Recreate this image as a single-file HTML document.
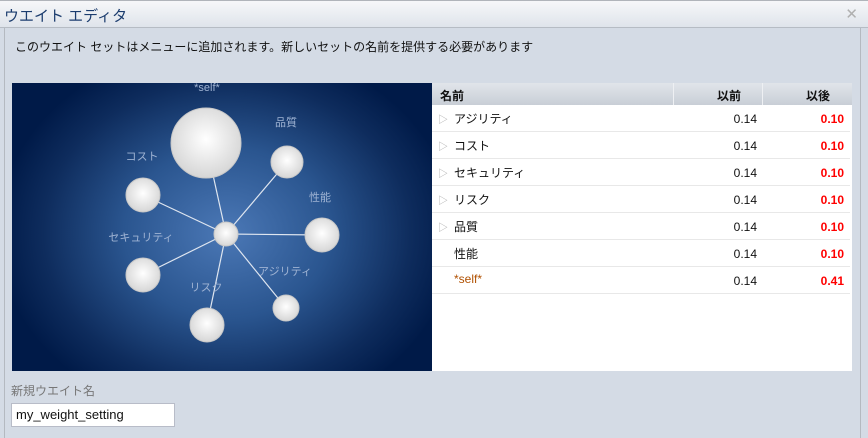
<!DOCTYPE html>
<html><head><meta charset="utf-8"><style>
*{margin:0;padding:0;box-sizing:border-box}
body{width:868px;height:429px;overflow:hidden;background:#d4dbe5;font-family:"Liberation Sans","Noto Sans CJK JP",sans-serif;position:relative}
.title{position:absolute;left:0;top:0;width:868px;height:28px;background:linear-gradient(#f6f7f9,#dfe4eb);border-top:1px solid #b0b4ba;border-bottom:1px solid #b6bcc4}
.title span{position:absolute;left:4px;top:4px;font-size:15px;color:#1b3c6e}
.x{position:absolute;right:10px;top:4px;font-size:15px;color:#b0b0b0}
.panel{position:absolute;left:4px;top:28px;width:857px;height:410px;border-left:1px solid #b4b9c0;border-right:1px solid #b4b9c0}
.msg{position:absolute;left:15px;top:38px;font-size:12px;color:#111}
.chart{position:absolute;left:12px;top:83px;width:420px;height:288px;background:radial-gradient(ellipse 230px 190px at 215px 150px,#4b78b6 0%,#2a558f 45%,#0e2c5d 80%,#001a48 100%)}
.tbl{position:absolute;left:432px;top:83px;width:420px;height:288px;background:#fff}
.hd{height:22px;background:linear-gradient(#e1e5ea,#c8ced6);position:relative;font-size:12px;font-weight:bold;color:#111}
.hd div{position:absolute;top:4px}
.row{height:27px;border-bottom:1px solid #e8e8e8;position:relative;font-size:12px;width:418px}
.row .n{position:absolute;left:22px;top:5px;color:#111}
.row .t{position:absolute;left:6px;top:6px;color:#aaa;font-size:10px}
.row .a{position:absolute;right:93px;top:7px;font-size:12px;color:#111}
.row .b{position:absolute;right:6px;top:7px;font-size:12px;color:#f00;font-weight:bold}
.lbl{position:absolute;left:11px;top:382px;font-size:12px;color:#777}
.inp{position:absolute;left:11px;top:403px;width:164px;height:24px;border:1px solid #b8bcc8;background:#fff;font-size:13px;padding:3px 4px;color:#111}
</style></head><body>
<div class="title"><span>ウエイト エディタ</span><div class="x">✕</div></div>
<div class="panel"></div>
<div class="msg">このウエイト セットはメニューに追加されます。新しいセットの名前を提供する必要があります</div>
<div class="chart"><svg width="420" height="288" viewBox="12 83 420 288">
<defs><radialGradient id="g" cx="50%" cy="45%" r="55%"><stop offset="0" stop-color="#fff"/><stop offset="1" stop-color="#d6d6d6"/></radialGradient></defs>
<g stroke="#dfe6f0" stroke-width="1.2">
<line x1="226" y1="234" x2="206" y2="143"/><line x1="226" y1="234" x2="287" y2="162"/><line x1="226" y1="234" x2="322" y2="235"/><line x1="226" y1="234" x2="286" y2="308"/><line x1="226" y1="234" x2="207" y2="325"/><line x1="226" y1="234" x2="143" y2="275"/><line x1="226" y1="234" x2="143" y2="195"/></g>
<g fill="url(#g)" stroke="#c8c8c8">
<circle cx="206" cy="143" r="35"/><circle cx="287" cy="162" r="16"/><circle cx="322" cy="235" r="17"/><circle cx="286" cy="308" r="13"/><circle cx="207" cy="325" r="17"/><circle cx="143" cy="275" r="17"/><circle cx="143" cy="195" r="17"/><circle cx="226" cy="234" r="12"/></g>
<g fill="#9fb3d3" font-size="11" text-anchor="middle" font-family="Liberation Sans,Noto Sans CJK JP,sans-serif">
<text x="207" y="91">*self*</text><text x="286" y="126">品質</text><text x="320" y="201">性能</text><text x="285" y="275">アジリティ</text><text x="206" y="291">リスク</text><text x="141" y="241">セキュリティ</text><text x="142" y="160">コスト</text></g>
</svg></div>
<div class="tbl">
<div class="hd"><div style="left:8px">名前</div><div style="left:241px;top:0;height:22px;border-left:1px solid #eef0f3"></div><div style="left:285px">以前</div><div style="left:330px;top:0;height:22px;border-left:1px solid #eef0f3"></div><div style="left:374px">以後</div></div>
<div class="row"><span class="t">▷</span><span class="n">アジリティ</span><span class="a">0.14</span><span class="b">0.10</span></div>
<div class="row"><span class="t">▷</span><span class="n">コスト</span><span class="a">0.14</span><span class="b">0.10</span></div>
<div class="row"><span class="t">▷</span><span class="n">セキュリティ</span><span class="a">0.14</span><span class="b">0.10</span></div>
<div class="row"><span class="t">▷</span><span class="n">リスク</span><span class="a">0.14</span><span class="b">0.10</span></div>
<div class="row"><span class="t">▷</span><span class="n">品質</span><span class="a">0.14</span><span class="b">0.10</span></div>
<div class="row"><span class="n">性能</span><span class="a">0.14</span><span class="b">0.10</span></div>
<div class="row"><span class="n" style="color:#b05000">*self*</span><span class="a">0.14</span><span class="b">0.41</span></div>
</div>
<div class="lbl">新規ウエイト名</div>
<div class="inp">my_weight_setting</div>
</body></html>
